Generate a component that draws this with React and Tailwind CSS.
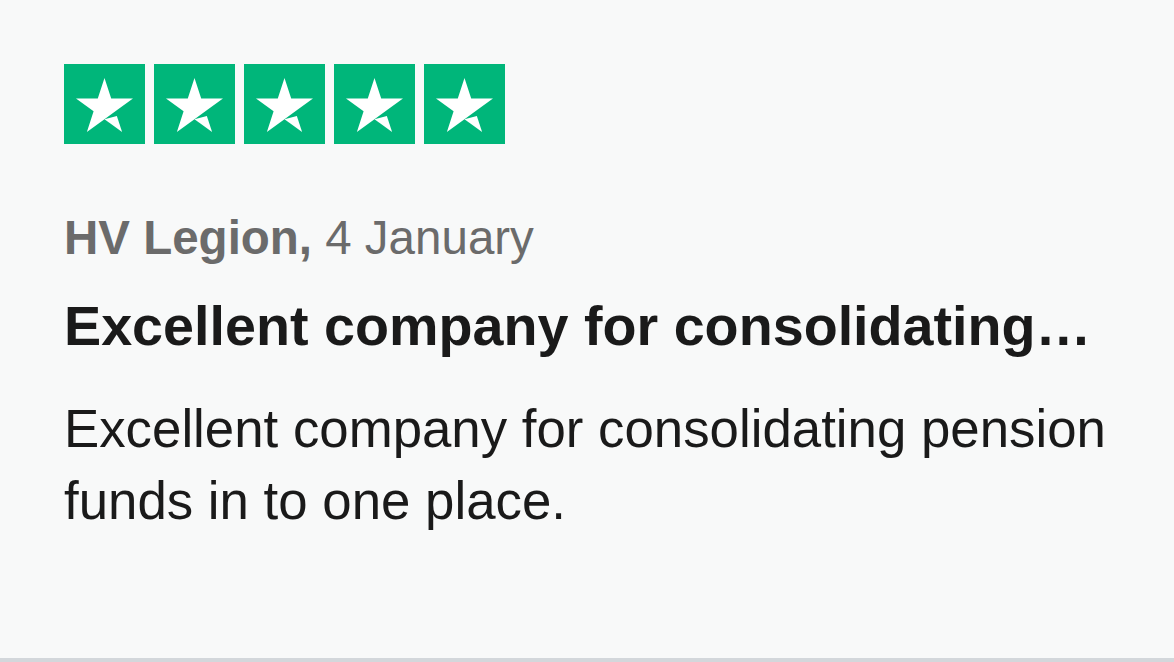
import React from "react";

const Star = () => (
  <div className="w-[81px] h-[80px] bg-[#00b67a] flex-none">
    <svg viewBox="0 0 81 80" className="w-full h-full">
      <g transform="translate(-4.2 -5) scale(0.931)" fill="#ffffff">
        <path d="M48 64.7L61.3 61.3 66.9 78.5z" />
        <path d="M78.6 42.5H55.2L48 20.4l-7.2 22.1H17.4l18.9 13.7-7.2 22.1 18.9-13.7 11.7-8.4L78.6 42.5z" />
      </g>
    </svg>
  </div>
);

const App = () => {
  return (
    <div
      className="h-[662px] w-full bg-[#f8f9f9] border-b-4 border-[#d3d7db] px-16 pt-16 overflow-hidden"
      style={{ fontFamily: '"Liberation Sans", Arial, Helvetica, sans-serif' }}
    >
      <div className="flex gap-[9px]">
        {[1, 2, 3, 4, 5].map((i) => (
          <Star key={i} />
        ))}
      </div>
      <p className="mt-[66px] text-[47.5px] leading-[56px] text-[#6b6b6b]">
        <span className="font-bold">HV Legion,</span> 4 January
      </p>
      <h2 className="mt-[28px] text-[55.7px] leading-[64px] font-bold text-[#1a1a1a] whitespace-nowrap">
        Excellent company for consolidating…
      </h2>
      <p className="mt-[35px] text-[52.8px] leading-[72px] text-[#1a1a1a]">
        Excellent company for consolidating pension funds in to one place.
      </p>
    </div>
  );
};

export default App;
